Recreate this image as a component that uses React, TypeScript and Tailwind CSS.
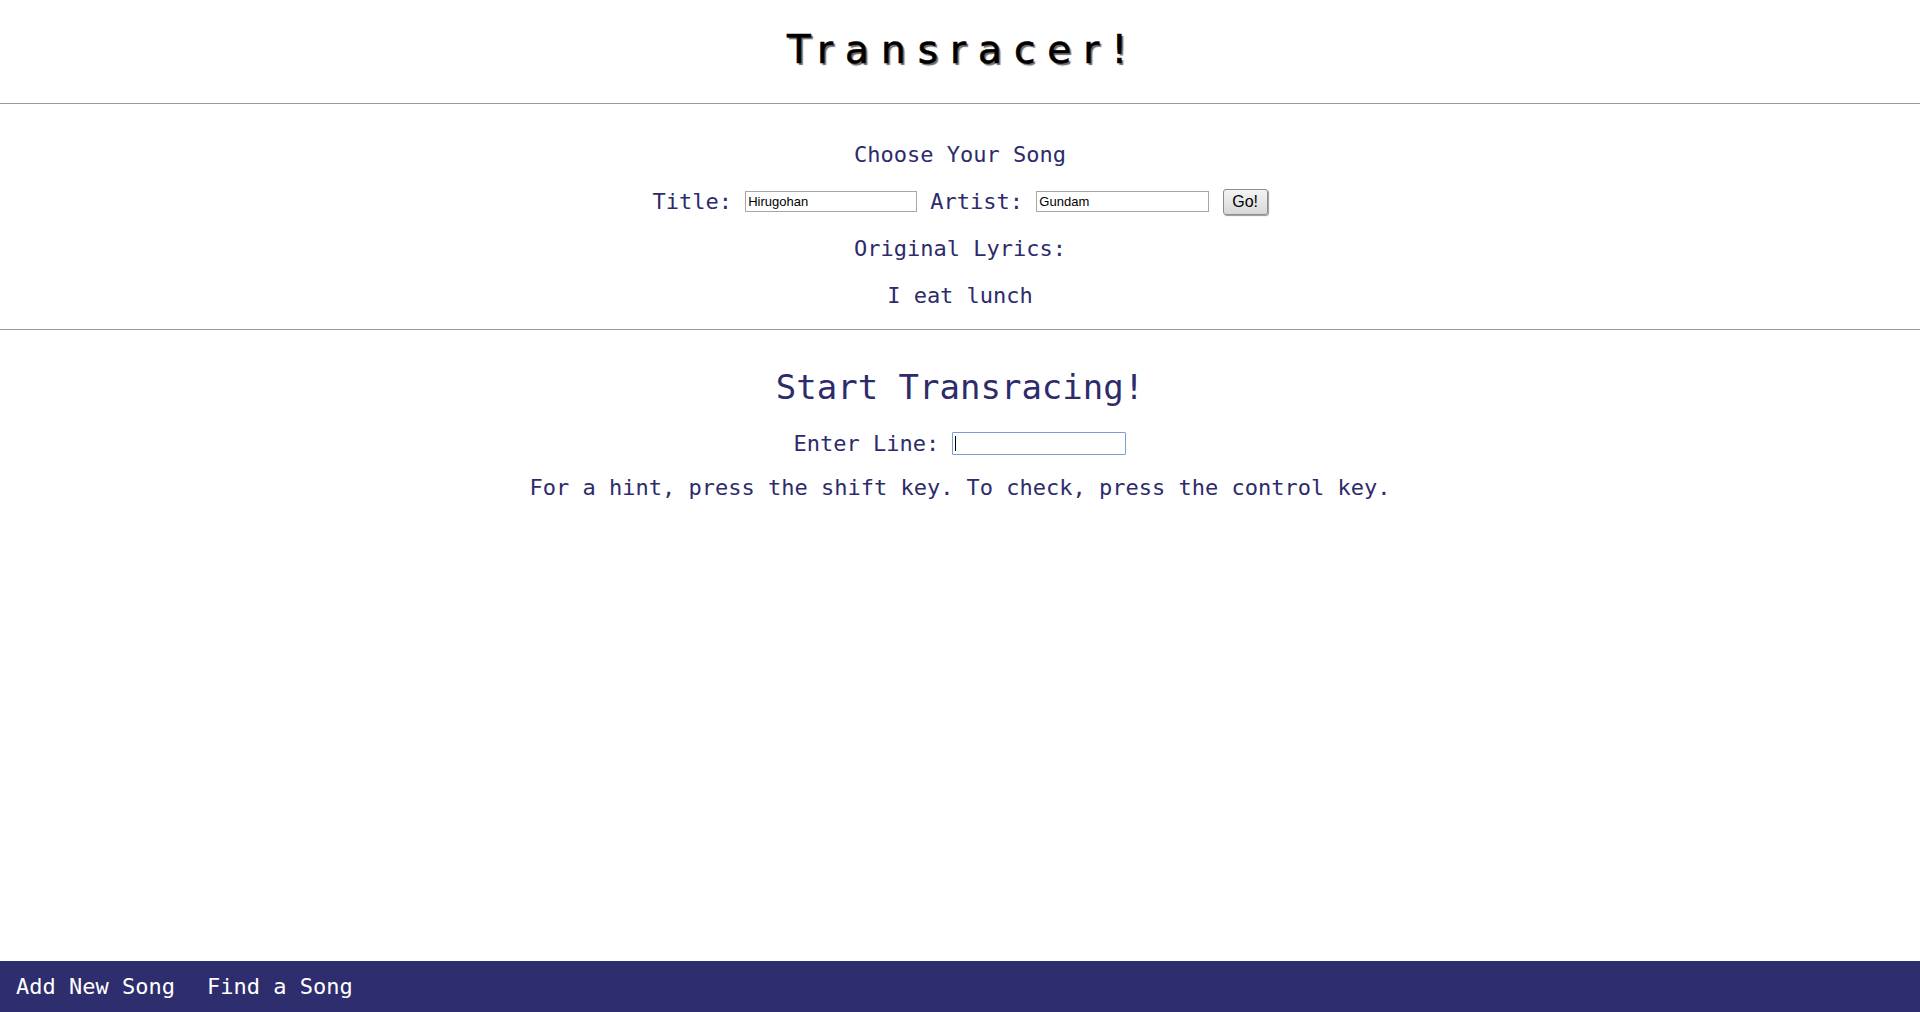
import { useState } from "react";

const mono = "font-['DejaVu_Sans_Mono','Liberation_Mono',monospace]";

export default function App() {
  const [title, setTitle] = useState("Hirugohan");
  const [artist, setArtist] = useState("Gundam");
  const [line, setLine] = useState("");

  return (
    <div className={`h-screen flex flex-col bg-white text-[#2d2b6b] ${mono}`}>
      {/* header */}
      <div className="h-[104px] shrink-0 flex items-center justify-center border-b border-[#9a9a9a]">
        <h1 className="font-['DejaVu_Sans','Verdana',sans-serif] text-[39px] tracking-[12px] text-black [text-shadow:2px_2px_1px_#6a6a6a] [-webkit-text-stroke:0.6px_black] pl-[6px] pb-[2px]">
          Transracer!
        </h1>
      </div>

      {/* song picker */}
      <div className="shrink-0 flex flex-col items-center pt-[27px] pb-[10px] border-b border-[#9a9a9a] text-[22px]">
        <div className="h-[47px] flex items-center">Choose Your Song</div>
        <div className="h-[47px] flex items-center whitespace-pre">
          <span>Title: </span>
          <input
            value={title}
            onChange={(e) => setTitle(e.target.value)}
            className="w-[172px] h-[21px] border border-[#a6a6a6] px-[2px] text-[13px] text-black font-['Liberation_Sans',Arial,sans-serif] outline-none"
          />
          <span> Artist: </span>
          <input
            value={artist}
            onChange={(e) => setArtist(e.target.value)}
            className="w-[173px] h-[21px] border border-[#a6a6a6] px-[2px] text-[13px] text-black font-['Liberation_Sans',Arial,sans-serif] outline-none"
          />
          <span> </span>
          <button className="w-[45px] h-[26px] rounded-[3px] border border-[#8c8c8c] bg-gradient-to-b from-[#f4f4f4] to-[#d8d8d8] shadow-[1px_1px_1px_#9a9a9a] text-[16px] text-black font-['Liberation_Sans',Arial,sans-serif] leading-none">
            Go!
          </button>
        </div>
        <div className="h-[47px] flex items-center">Original Lyrics:</div>
        <div className="h-[47px] flex items-center">I eat lunch</div>
      </div>

      {/* race */}
      <div className="flex flex-col items-center pt-[32px]">
        <h2 className="h-[50px] flex items-center text-[34px]">Start Transracing!</h2>
        <div className="mt-[9px] h-[44px] flex items-center whitespace-pre text-[22px]">
          <span>Enter Line: </span>
          <div className="relative">
            <input
              autoFocus
              value={line}
              onChange={(e) => setLine(e.target.value)}
              className="block w-[174px] h-[23px] border border-[#7b9dd4] rounded-[1px] px-[2px] text-[13px] text-black caret-black font-['Liberation_Sans',Arial,sans-serif] outline-none"
            />
            {line === "" && (
              <span className="pointer-events-none absolute left-[3px] top-[4px] w-[1px] h-[15px] bg-black" />
            )}
          </div>
        </div>
        <div className="h-[44px] flex items-center text-[22px]">
          For a hint, press the shift key. To check, press the control key.
        </div>
      </div>

      {/* footer */}
      <div className="mt-auto h-[51px] shrink-0 bg-[#2e2d6d] flex items-center gap-[32px] pl-[16px] text-[22px] text-white">
        <a href="#">Add New Song</a>
        <a href="#">Find a Song</a>
      </div>
    </div>
  );
}
